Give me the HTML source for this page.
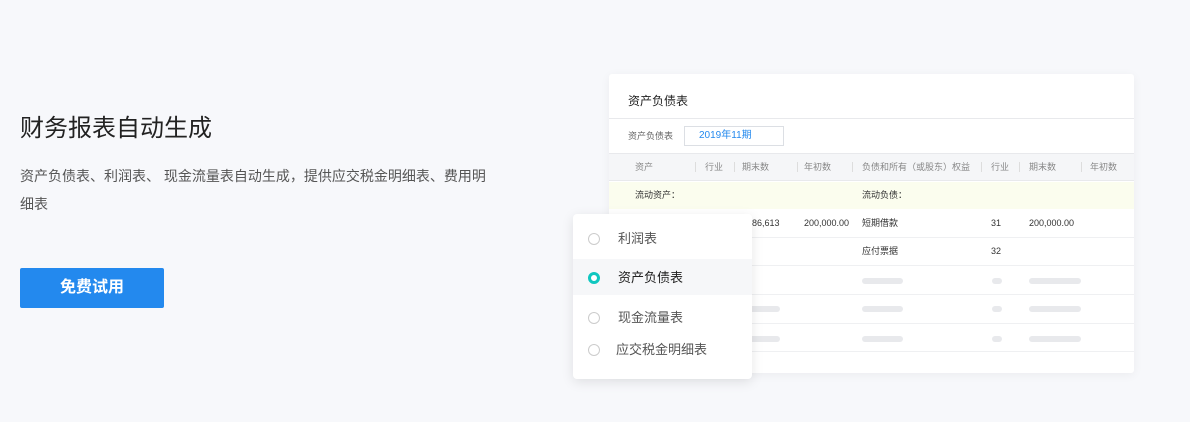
<!DOCTYPE html>
<html><head><meta charset="utf-8"><style>
*{margin:0;padding:0;box-sizing:border-box}
body{width:1190px;height:422px;background:#f7f8fb;font-family:"Liberation Sans","Noto Sans CJK SC",sans-serif;position:relative;overflow:hidden}
.a{position:absolute;white-space:nowrap}
.t{font-size:9px;color:#333;line-height:12px}
.h{font-size:9px;color:#888;line-height:12px}
.sep{position:absolute;width:1px;height:10px;background:#ddd;top:162px}
.pill{position:absolute;height:6px;border-radius:3px;background:#e8e9ec}
.line{position:absolute;left:609px;width:525px;height:1px;background:#eff0f2}
.rad{position:absolute;left:588px;width:12px;height:12px;border-radius:50%;border:1px solid #ccc;background:#fff}
.di{position:absolute;left:618px;font-size:13px;color:#555;line-height:16px;white-space:nowrap}
</style></head><body>
<div class="a" style="left:20px;top:113px;font-size:24px;color:#222;line-height:32px">财务报表自动生成</div>
<div class="a" style="left:20px;top:162px;font-size:14px;color:#555;line-height:28px;white-space:normal;width:472px">资产负债表、利润表、 现金流量表自动生成，提供应交税金明细表、费用明细表</div>
<div class="a" style="left:20px;top:268px;width:144px;height:40px;background:#2389ee;border-radius:2px;color:#fff;font-size:16px;font-weight:bold;text-align:center;line-height:40px">免费试用</div>

<div class="a" style="left:609px;top:74px;width:525px;height:299px;background:#fff;border-radius:3px;box-shadow:0 2px 10px rgba(0,0,0,.05)"></div>
<div class="a" style="left:628px;top:93px;font-size:12px;color:#222;line-height:16px">资产负债表</div>
<div class="line" style="top:118px;background:#e8e9ec"></div>
<div class="a h" style="left:628px;top:130px;color:#666">资产负债表</div>
<div class="a" style="left:684px;top:126px;width:100px;height:20px;border:1px solid #dcdfe4;font-size:10px;color:#2389ee;line-height:18px;padding-left:14px">2019年11期</div>
<div class="a" style="left:609px;top:153px;width:525px;height:28px;background:#f5f6f8;border-top:1px solid #e8e9ec;border-bottom:1px solid #e8e9ec"></div>
<div class="a h" style="left:635px;top:161px">资产</div>
<div class="sep" style="left:695px"></div><div class="a h" style="left:705px;top:161px">行业</div>
<div class="sep" style="left:734px"></div><div class="a h" style="left:742px;top:161px">期末数</div>
<div class="sep" style="left:797px"></div><div class="a h" style="left:804px;top:161px">年初数</div>
<div class="sep" style="left:852px"></div><div class="a h" style="left:862px;top:161px">负债和所有（或股东）权益</div>
<div class="sep" style="left:981px"></div><div class="a h" style="left:991px;top:161px">行业</div>
<div class="sep" style="left:1019px"></div><div class="a h" style="left:1029px;top:161px">期末数</div>
<div class="sep" style="left:1081px"></div><div class="a h" style="left:1090px;top:161px">年初数</div>
<div class="a" style="left:609px;top:182px;width:525px;height:27px;background:#fbfdee"></div>
<div class="a t" style="left:635px;top:189px">流动资产：</div>
<div class="a t" style="left:862px;top:189px">流动负债：</div>
<div class="line" style="top:237px"></div><div class="line" style="top:265px"></div><div class="line" style="top:294px"></div><div class="line" style="top:323px"></div><div class="line" style="top:351px"></div>
<div class="a t" style="left:752px;top:217px">86,613</div>
<div class="a t" style="left:804px;top:217px">200,000.00</div>
<div class="a t" style="left:862px;top:217px">短期借款</div>
<div class="a t" style="left:991px;top:217px">31</div>
<div class="a t" style="left:1029px;top:217px">200,000.00</div>
<div class="a t" style="left:862px;top:245px">应付票据</div>
<div class="a t" style="left:991px;top:245px">32</div>
<div class="pill" style="left:862px;top:278px;width:41px"></div><div class="pill" style="left:992px;top:278px;width:10px"></div><div class="pill" style="left:1029px;top:278px;width:52px"></div>
<div class="pill" style="left:740px;top:306px;width:40px"></div><div class="pill" style="left:862px;top:306px;width:41px"></div><div class="pill" style="left:992px;top:306px;width:10px"></div><div class="pill" style="left:1029px;top:306px;width:52px"></div>
<div class="pill" style="left:740px;top:336px;width:40px"></div><div class="pill" style="left:862px;top:336px;width:41px"></div><div class="pill" style="left:992px;top:336px;width:10px"></div><div class="pill" style="left:1029px;top:336px;width:52px"></div>

<div class="a" style="left:573px;top:214px;width:179px;height:165px;background:#fff;border-radius:4px;box-shadow:0 3px 12px rgba(0,0,0,.1)"></div>
<div class="a" style="left:573px;top:259px;width:179px;height:36px;background:#f6f7f9"></div>
<div class="rad" style="top:233px"></div><div class="di" style="top:231px">利润表</div>
<div class="rad" style="top:272px;border:3px solid #10c7c0"></div><div class="di" style="top:270px;color:#222">资产负债表</div>
<div class="rad" style="top:312px"></div><div class="di" style="top:310px">现金流量表</div>
<div class="rad" style="top:344px"></div><div class="di" style="top:342px;left:616px">应交税金明细表</div>
</body></html>
